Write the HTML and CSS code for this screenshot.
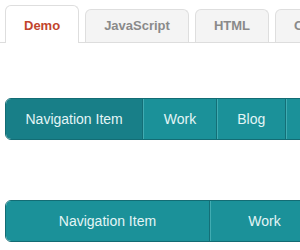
FILE: index.html
```html
<!DOCTYPE html>
<html lang="en">
<head>
  <meta charset="UTF-8">
  <meta name="viewport" content="width=device-width, initial-scale=1.0">
  <title>Navigation Demo</title>
  <link rel="stylesheet" href="styles.css">
</head>
<body>

<div class="tabs">
  <div class="tab active">Demo</div>
  <div class="tab">JavaScript</div>
  <div class="tab">HTML</div>
  <div class="tab">CSS</div>
  <div class="tab">Result</div>
</div>

<ul class="nav">
  <li class="current">Navigation Item</li>
  <li>Work</li>
  <li>Blog</li>
  <li>About</li>
  <li>Contact</li>
</ul>

<ul class="nav nav-full">
  <li>Navigation Item</li>
  <li>Work</li>
  <li>Blog</li>
  <li>About</li>
  <li>Contact</li>
</ul>

</body>
</html>
```

FILE: styles.css
```css
body { margin: 0; font-family: "Liberation Sans", Arial, sans-serif; background: #fff; overflow: hidden; }

.tabs {
  display: flex;
  align-items: flex-end;
  gap: 6px;
  padding: 0 5px;
  border-bottom: 1px solid #ddd;
  height: 42px;
  white-space: nowrap;
}
.tab {
  flex: none;
  padding: 8px 18px;
  line-height: 16px;
  font-size: 13px;
  font-weight: bold;
  color: #8a8a8a;
  background: #f4f4f4;
  border: 1px solid #dedede;
  border-bottom: none;
  border-radius: 6px 6px 0 0;
}
.tab.active {
  padding: 12px 18px 9px;
  margin-bottom: -1px;
  color: #c2452d;
  background: #fff;
}

.nav {
  list-style: none;
  display: flex;
  width: max-content;
  margin: 55px 0 0 5px;
  padding: 0;
  border: 1px solid #136c74;
  border-radius: 6px;
  overflow: hidden;
  white-space: nowrap;
}
.nav li {
  padding: 0 19.5px;
  line-height: 40px;
  font-size: 14px;
  color: #e3f5f6;
  background: #1b9199;
  border-left: 1px solid #40acb2;
  border-right: 1px solid #146f77;
}
.nav li:first-child { border-left: none; }
.nav li:last-child { border-right: none; }
.nav li.current { background: #187f88; }

.nav-full {
  display: table;
  width: 662px;
  margin-top: 60px;
  border-collapse: separate;
}
.nav-full li {
  display: table-cell;
  text-align: center;
}
```
